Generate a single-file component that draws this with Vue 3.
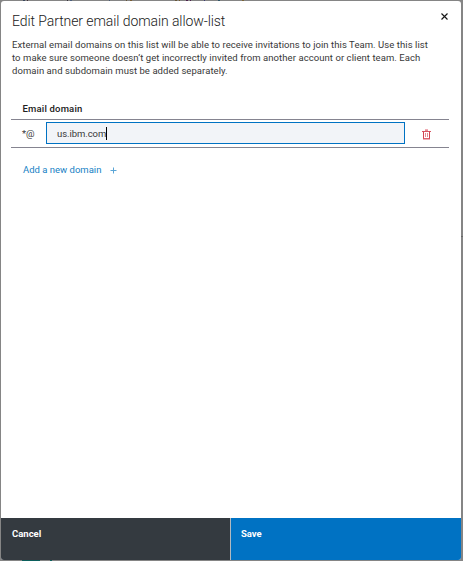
<script setup>
import { ref } from 'vue'
const domain = ref('us.ibm.com')
</script>

<template>
  <div class="backdrop">
    <section class="modal" role="dialog">
      <header class="header">
        <h1 class="title">Edit Partner email domain allow-list</h1>
        <button class="close" aria-label="Close">
          <svg width="7" height="7" viewBox="0 0 7 7"><path d="M.5 .5 6.5 6.5M6.5 .5 .5 6.5" stroke="#171717" stroke-width="1.15" /></svg>
        </button>
      </header>
      <p class="description">
        <span class="line first">External email domains on this list will be able to receive invitations to join this Team. Use this list</span>
        <span class="line second">to make sure someone doesn’t get incorrectly invited from another account or client team. Each</span>
        <span class="line third">domain and subdomain must be added separately.</span>
      </p>
      <div class="table">
        <div class="heading"><span>Email domain</span></div>
        <div class="row">
          <span class="prefix">*@</span>
          <div class="field"><span class="value">{{ domain }}</span><i class="caret"></i></div>
          <button class="delete" aria-label="Delete">
            <svg width="9" height="11" viewBox="0 0 9 11" fill="none">
              <path d="M3 .5H6" stroke="#f0aeb5" />
              <path d="M3 1.5H6" stroke="#e58a93" />
              <path d="M0 2.5H9" stroke="#d75562" />
              <path d="M1.5 2.5V10M7.5 2.5V10" stroke="#d34451" />
              <path d="M1 10.5H8" stroke="#f0aeb5" />
              <path d="M1.5 9.5H7.5" stroke="#dc6470" />
              <path d="M3.5 4V8M5.5 4V8" stroke="#e58a93" />
            </svg>
          </button>
        </div>
      </div>
      <button class="add">
        <span>Add a new domain</span>
        <svg width="7" height="7" viewBox="0 0 7 7"><path d="M3.5 .5V6.5M.5 3.5H6.5" stroke="#5aa5d6" /></svg>
      </button>
      <footer class="footer">
        <button class="cancel"><span>Cancel</span></button>
        <button class="save"><span>Save</span></button>
      </footer>
    </section>
  </div>
</template>

<style>
html, body { margin: 0; overflow: hidden; }
</style>

<style scoped>
* { box-sizing: border-box; }
.backdrop {
  width: 463px; height: 561px; padding: 1px 2px 1px 1px;
  background:
    linear-gradient(#0b5f5c, #0b5f5c) 22px 560px / 18px 1px no-repeat,
    linear-gradient(#0b5f5c, #0b5f5c) 50px 560px / 2px 1px no-repeat,
    linear-gradient(#666, #666) 461px 236px / 2px 1px no-repeat,
    linear-gradient(90deg, transparent 23px, #39465c 23px 25px, transparent 25px 27px, #402f3b 27px 28px, transparent 28px 67px, #35323d 67px 68px, transparent 68px 70px, #4c5e7b 70px 72px, transparent 72px 109px, #495a76 109px 110px, transparent 110px 126px, #665536 126px 127px, transparent 127px 130px, #775b35 130px 132px, transparent 132px 175px, #665536 175px 177px, transparent 177px 179px, #765a2b 179px 180px, transparent 180px 186px, #4b204b 186px 188px, transparent 188px 190px, #4b204b 190px 191px, transparent 191px 204px, #3b3b75 204px 205px, transparent 205px 218px, #305568 218px 220px, transparent 220px 242px, #7b6336 242px 244px, transparent 244px) 0 0 / 463px 1px no-repeat,
    #858585;
  font-family: Roboto, "Liberation Sans", sans-serif; color: #383838;
}
.modal { display: flex; flex-direction: column; width: 460px; height: 559px; background: #fff; border-radius: 3px; overflow: hidden; }
button { margin: 0; padding: 0; border: 0; background: none; color: inherit; font: inherit; text-align: left; }
svg { display: block; }
.header { display: flex; justify-content: space-between; height: 37px; padding: 11px 13px 0 11px; }
.title { margin: 0; color: #202020; font-size: 14px; line-height: 19px; font-weight: 300; letter-spacing: -.08px; white-space: nowrap; }
.close { height: 7px; margin-top: 1px; }
.description { margin: 0; padding-left: 11px; font-size: 9.5px; line-height: 13px; }
.line { display: block; white-space: nowrap; }
.first { letter-spacing: .062px; }
.second { letter-spacing: .069px; }
.third { letter-spacing: .06px; }
.table { margin: 25px 12px 0 10px; }
.heading { height: 18px; padding-left: 11.5px; border-bottom: 1px solid #858490; color: #202020; font-size: 9.5px; line-height: 14px; font-weight: 500; letter-spacing: .18px; }
.row { display: flex; align-items: flex-start; height: 28px; padding-top: 2px; border-bottom: 1px solid #858490; font-size: 9.5px; }
.prefix { width: 35px; padding: 5px 0 0 11px; line-height: 13px; }
.field { display: flex; align-items: center; width: 359px; height: 22px; padding: 1px 0 0 10px; border: 1px solid #0072c3; background: #f2f4f8; }
.value { letter-spacing: -.06px; }
.caret { width: 1px; height: 13px; background: #000; }
.delete { margin: 7px 0 0 17px; }
.add { display: flex; align-items: center; gap: 9px; margin: 15px 0 0 22px; color: #1681c5; font-size: 9.5px; line-height: 14px; }
.footer { display: grid; grid-template-columns: 229px 230px; gap: 1px; height: 42px; margin-top: auto; background: #b1b9c0; color: #fff; font-size: 9.5px; font-weight: 700; line-height: 14px; }
.footer button { display: flex; align-items: flex-start; padding: 9px 0 0 11px; }
.cancel { background: #343a40; }
.footer .save { background: #0072c3; padding-left: 10px; }
</style>
